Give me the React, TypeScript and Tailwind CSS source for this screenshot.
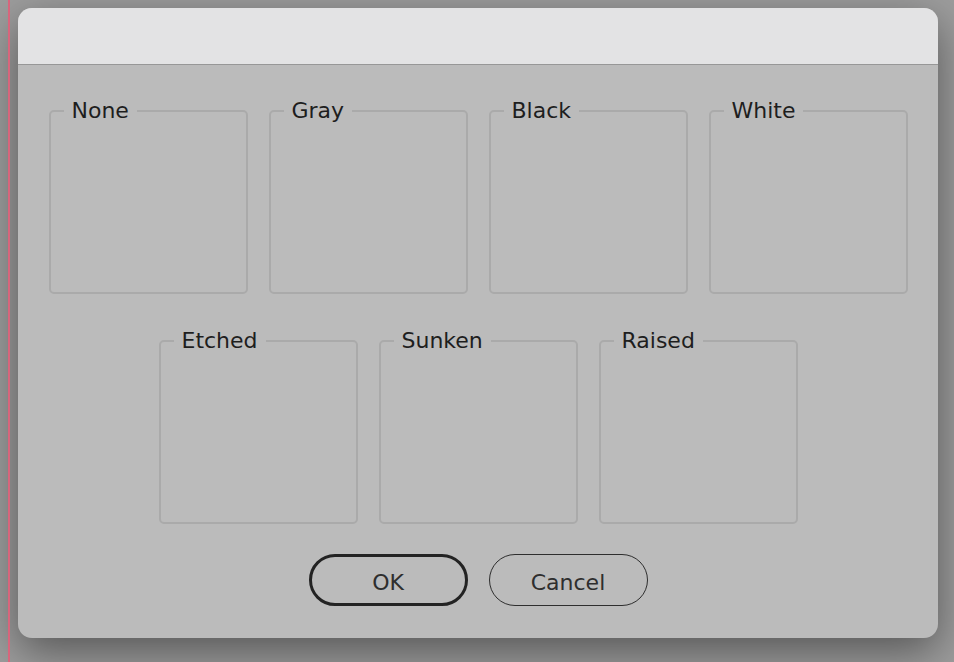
import React from "react";

const font = { fontFamily: '"DejaVu Sans", "Liberation Sans", sans-serif' };

function Group({ label }: { label: string }) {
  return (
    <fieldset className="w-[199px] h-[195px] border-2 border-[#aaaaaa] rounded-[5px] px-0">
      <legend className="ml-[13px] px-[8px] text-[22px] leading-[24px] text-[#1e1e1e]">
        {label}
      </legend>
    </fieldset>
  );
}

export default function App() {
  const row1 = ["None", "Gray", "Black", "White"];
  const row2 = ["Etched", "Sunken", "Raised"];

  return (
    <div
      className="relative w-[954px] h-[662px] overflow-hidden bg-[#9d9d9d] pl-[18px] pt-[8px]"
      style={font}
    >
      <div className="absolute z-10 left-[8px] top-0 h-[662px] w-[2px] bg-[#d8657c]" />
      <div className="w-[920px] h-[630px] rounded-[14px] bg-[#bbbbbb] overflow-hidden shadow-[0_14px_44px_rgba(0,0,0,0.45)] flex flex-col">
        <div className="h-[57px] shrink-0 bg-[#e3e3e4] border-b-[1.5px] border-[#979797]" />
        <div className="flex flex-col items-center pt-[34px]">
          <div className="flex gap-[21px]">
            {row1.map((l) => (
              <Group key={l} label={l} />
            ))}
          </div>
          <div className="flex gap-[21px] mt-[35px]">
            {row2.map((l) => (
              <Group key={l} label={l} />
            ))}
          </div>
          <div className="flex gap-[21px] mt-[30px]">
            <button className="w-[159px] h-[52px] pt-[4px] rounded-full border-[3px] border-[#232323] text-[22px] text-[#2e2e2e]">
              OK
            </button>
            <button className="w-[159px] h-[52px] pt-[4px] rounded-full border-[1.5px] border-[#2e2e2e] text-[22px] text-[#2e2e2e]">
              Cancel
            </button>
          </div>
        </div>
      </div>
    </div>
  );
}
